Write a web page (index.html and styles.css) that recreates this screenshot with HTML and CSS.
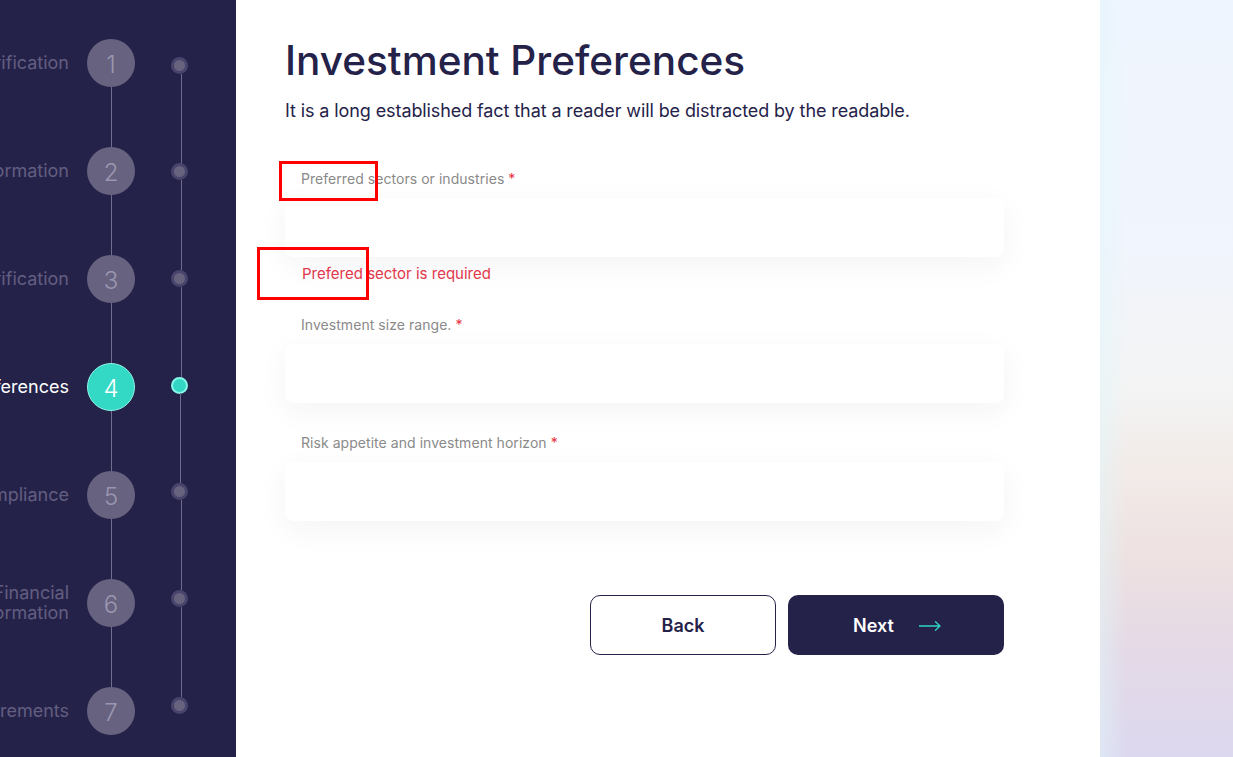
FILE: index.html
```html
<!DOCTYPE html>
<html lang="en">
<head>
<meta charset="utf-8">
<title>Investment Preferences</title>
<link rel="stylesheet" href="styles.css">
</head>
<body>
<div class="page">
  <aside class="sidebar">
    <ol class="steps">
      <li class="step"><span class="step-label"><span>Identity Verification</span></span><span class="step-num">1</span></li>
      <li class="step"><span class="step-label"><span>Personal Information</span></span><span class="step-num">2</span></li>
      <li class="step"><span class="step-label"><span>Address Verification</span></span><span class="step-num">3</span></li>
      <li class="step active"><span class="step-label"><span>Investment Preferences</span></span><span class="step-num">4</span></li>
      <li class="step"><span class="step-label"><span>Regulatory Compliance</span></span><span class="step-num">5</span></li>
      <li class="step"><span class="step-label"><span>Financial<br>Information</span></span><span class="step-num">6</span></li>
      <li class="step last"><span class="step-label"><span>Requirements</span></span><span class="step-num">7</span></li>
    </ol>
    <div class="track">
      <span class="dot"></span>
      <span class="dot"></span>
      <span class="dot"></span>
      <span class="dot active"></span>
      <span class="dot"></span>
      <span class="dot"></span>
      <span class="dot last"></span>
    </div>
  </aside>

  <main class="main">
    <h1 class="title">Investment Preferences</h1>
    <p class="subtitle">It is a long established fact that a reader will be distracted by the readable.</p>

    <form class="form">
      <div class="field">
        <label class="field-label">Preferred sectors or industries <span class="req">*</span></label>
        <div class="input"></div>
        <div class="error">Prefered sector is required</div>
      </div>
      <div class="field">
        <label class="field-label">Investment size range. <span class="req">*</span></label>
        <div class="input"></div>
      </div>
      <div class="field">
        <label class="field-label">Risk appetite and investment horizon <span class="req">*</span></label>
        <div class="input"></div>
      </div>

      <div class="actions">
        <button type="button" class="btn btn-back">Back</button>
        <button type="button" class="btn btn-next">Next
          <svg class="arrow" width="22" height="10" viewBox="0 0 22 10" fill="none"><path d="M0 5H21M16.5 0.8L21 5L16.5 9.2" stroke="#2fd5c2" stroke-width="1.3" stroke-linecap="round" stroke-linejoin="round"/></svg>
        </button>
      </div>
    </form>
  </main>

  <div class="aside-right"></div>

  <span class="mark mark-1"></span>
  <span class="mark mark-2"></span>
</div>
</body>
</html>
```

FILE: styles.css
```css
* { box-sizing: border-box; }

html, body {
  margin: 0;
  padding: 0;
}

body {
  font-family: Inter, "Liberation Sans", sans-serif;
  color: #25224a;
  background: #ffffff;
}

.page {
  position: relative;
  display: flex;
  width: 1233px;
  height: 757px;
  overflow: hidden;
}

/* Sidebar */
.sidebar {
  width: 236px;
  flex: 0 0 236px;
  background: #25224a;
  display: flex;
  overflow: hidden;
}

.steps {
  list-style: none;
  margin: 0;
  padding: 39px 0 0 0;
  display: flex;
  flex-direction: column;
}

.step {
  display: flex;
  align-items: center;
  height: 48px;
  margin-bottom: 60px;
}

.step-label {
  width: 69px;
  display: flex;
  justify-content: flex-end;
  font-size: 18px;
  line-height: 20px;
  color: #625e80;
  white-space: nowrap;
  text-align: right;
  margin-right: 18px;
}

.step.active .step-label { color: #ffffff; }

.step-num {
  position: relative;
  width: 48px;
  height: 48px;
  border-radius: 50%;
  background: #67627f;
  color: #9b97b0;
  font-size: 24px;
  font-weight: 300;
  display: flex;
  align-items: center;
  justify-content: center;
  padding-top: 2px;
}

.step-num::after {
  content: "";
  position: absolute;
  left: 23.5px;
  top: 48px;
  width: 1px;
  height: 60px;
  background: #716d8c;
}

.step.last .step-num::after { display: none; }

.step.active .step-num {
  background: #33d9c5;
  color: #ffffff;
  border: 1px solid #8ff3e6;
}

.step.active .step-num::after { top: 47px; left: 22.5px; }

.track {
  margin-left: 36px;
  padding-top: 56.5px;
  display: flex;
  flex-direction: column;
  gap: 89.7px;
}

.dot {
  position: relative;
  display: block;
  width: 17px;
  height: 17px;
  border-radius: 50%;
  background: #67637f;
  border: 3px solid #48446c;
}

.dot::after {
  content: "";
  position: absolute;
  left: 6.5px;
  top: 14px;
  width: 1px;
  height: 90px;
  background: #6f6b8c;
}

.dot.last::after { display: none; }

.dot.active {
  background: #33d6c3;
  border: 2.5px solid #86f7e8;
}

.dot.active::after { left: 6.5px; top: 14.5px; }

/* Main */
.main {
  flex: 0 0 864px;
  background: #ffffff;
  padding: 37px 0 0 49px;
}

.title {
  margin: 0;
  font-size: 40.5px;
  line-height: 48px;
  font-weight: 500;
  color: #25224a;
  letter-spacing: 0;
}

.subtitle {
  margin: 13px 0 0 0;
  font-size: 18px;
  line-height: 24px;
  color: #25224a;
  letter-spacing: -0.1px;
  position: relative;
  top: 1px;
}

.form {
  margin-top: 47px;
  width: 719px;
  display: flex;
  flex-direction: column;
}

.field {
  display: flex;
  flex-direction: column;
  margin-bottom: 30px;
}

.field-label {
  font-size: 14px;
  line-height: 20px;
  color: #8a8a8a;
  padding-left: 16px;
  margin-bottom: 9px;
  letter-spacing: 0.05px;
}

.req { color: #e5313e; }

.input {
  height: 59px;
  border-radius: 8px;
  background: #ffffff;
  box-shadow: 0 8px 30px rgba(30, 30, 70, 0.05);
}

.error {
  margin-top: 7px;
  padding-left: 17px;
  font-size: 15px;
  line-height: 20px;
  color: #e1374b;
  margin-bottom: 1px;
}

.actions {
  margin-top: 44px;
  display: flex;
  justify-content: flex-end;
  gap: 12px;
}

.btn {
  height: 60px;
  border-radius: 10px;
  font-family: Inter, "Liberation Sans", sans-serif;
  font-size: 18px;
  font-weight: 600;
  display: flex;
  align-items: center;
  justify-content: center;
  cursor: pointer;
}

.btn-back {
  width: 186px;
  background: #ffffff;
  color: #25224a;
  border: 1px solid #25224a;
}

.btn-next {
  width: 216px;
  background: #25224a;
  color: #ffffff;
  border: none;
  gap: 25px;
  padding-left: 8px;
}

.arrow { display: block; margin-top: 1px; }

/* Right decorative panel */
.aside-right {
  flex: 1 1 auto;
  background:
    linear-gradient(90deg, rgba(225, 246, 250, 0.5) 0%, rgba(255, 255, 255, 0) 20%),
    linear-gradient(180deg, #eff5fe 0%, #f1f5fd 32%, #f3f3f3 52%, #f2ebe8 62%, #ede1e1 74%, #e4d9e6 86%, #dcd8ef 100%);
}

/* Annotation boxes */
.mark {
  position: absolute;
  border: 3px solid #ff0000;
  pointer-events: none;
}

.mark-1 {
  left: 279px;
  top: 161px;
  width: 99px;
  height: 40px;
}

.mark-2 {
  left: 257px;
  top: 247px;
  width: 112px;
  height: 53px;
}
```
